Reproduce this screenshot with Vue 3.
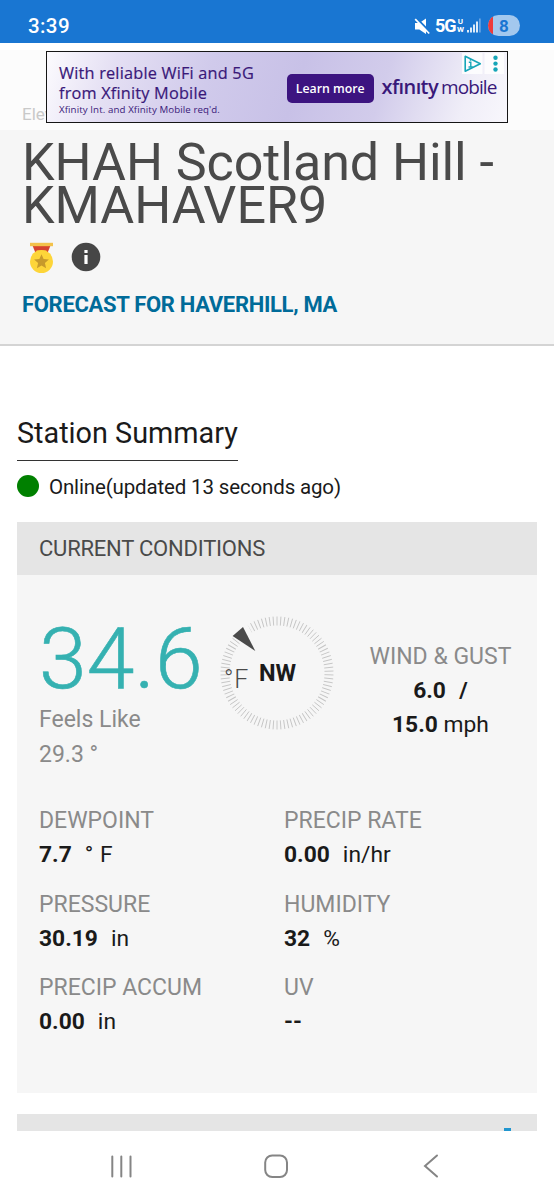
<script setup>
const ticks = Array.from({ length: 90 }, (_, i) => i * 4)
const readings = [
  { label: 'DEWPOINT', value: '7.7', unit: '° F' },
  { label: 'PRECIP RATE', value: '0.00', unit: 'in/hr' },
  { label: 'PRESSURE', value: '30.19', unit: 'in' },
  { label: 'HUMIDITY', value: '32', unit: '%' },
  { label: 'PRECIP ACCUM', value: '0.00', unit: 'in' },
  { label: 'UV', value: '--', unit: '' },
]
</script>

<template>
  <div class="screen">
    <div class="status">
      <span class="time">3:39</span>
      <div class="status-icons">
        <svg class="mute" width="17" height="17" viewBox="0 0 17 17">
          <path d="M1 5h4.300L12 .5v15.500L5.300 11.500H1z" fill="#fff" />
          <path d="M2.200 0l14.500 14.800" stroke="#1976d2" stroke-width="2.200" />
          <path d="M1.200 1.200l14 14.300" stroke="#fff" stroke-width="1.700" />
        </svg>
        <span class="net">5G</span>
        <span class="uw"><span>U</span><span>W</span></span>
        <svg class="signal" width="14" height="15" viewBox="0 0 14 15">
          <path d="M1 12v2.500M4 9.500v5M7 6.500v8M10 3.500v11" stroke="#fff" stroke-width="1.700" />
          <path d="M12.900 .5v14" stroke="#7db1e8" stroke-width="1.400" />
        </svg>
        <span class="battery"><span class="level"></span><span class="pct">8</span></span>
      </div>
    </div>

    <div class="top">
      <span class="elev">Elev</span>
      <div class="ad">
        <div class="ad-copy">
          <div class="ad-l1">With reliable WiFi and 5G</div>
          <div class="ad-l2">from Xfinity Mobile</div>
          <div class="ad-l3">Xfinity Int. and Xfinity Mobile req'd.</div>
        </div>
        <div class="ad-btn">Learn more</div>
        <div class="ad-logo"><span class="xf">xfınıty</span><span class="mob">mobile</span></div>
        <div class="ad-ctl">
          <svg width="42" height="21" viewBox="0 0 42 21">
            <path d="M0 0h20.500v21H0zM22.500 0H42v21H22.500z" fill="#fff" opacity=".8" />
            <path d="M3.200 3.300v15L18.300 10.800z" fill="none" stroke="#16a5b8" stroke-width="1.600" stroke-linejoin="round" />
            <path d="M6.800 9.300h2v4.800M6.500 14h4.300M8.500 6v1.700" fill="none" stroke="#16a5b8" stroke-width="1.400" />
            <g fill="#16a5b8"><circle cx="33.500" cy="4.700" r="2.200" /><circle cx="33.500" cy="10.600" r="2.200" /><circle cx="33.500" cy="16.500" r="2.200" /></g>
          </svg>
        </div>
      </div>
    </div>

    <header class="head">
      <h1>KHAH Scotland Hill -<br />KMAHAVER9</h1>
      <div class="badges">
        <svg width="26" height="32" viewBox="0 0 26 32">
          <path d="M3.500 3.500h18l-3 7.500h-12z" fill="#d6432f" />
          <path d="M1 .8h23v3.400H1z" fill="#f3c24b" />
          <path d="M7.500 8.500h10v3h-10z" fill="#f3c24b" />
          <circle cx="12.500" cy="19.500" r="11.500" fill="#fdd539" />
          <path d="M12.500 12.200l2.100 4.900 5.300.5-4 3.500 1.200 5.200-4.600-2.800-4.600 2.800 1.200-5.200-4-3.500 5.300-.5z" fill="#c79a2b" />
        </svg>
        <svg width="30" height="30" viewBox="0 0 30 30">
          <circle cx="15" cy="15" r="14.300" fill="#464646" />
          <path d="M13.400 8h3.200v3.100h-3.200zM13.400 12.900h3.200v9.100h-3.200z" fill="#fff" />
        </svg>
      </div>
      <div class="forecast">FORECAST FOR HAVERHILL, MA</div>
    </header>

    <main>
      <h2><span>Station Summary</span></h2>
      <div class="online"><span class="dot"></span><span>Online(updated 13 seconds ago)</span></div>

      <section class="card">
        <div class="card-head">CURRENT CONDITIONS</div>
        <div class="now">
          <div class="temp">
            <div class="deg">34.6</div>
            <div class="feels">Feels Like</div>
            <div class="feels">29.3 °</div>
          </div>
          <div class="compass">
            <svg width="120" height="120" viewBox="-60 -60 120 120">
              <path v-for="a in ticks" :key="a" d="M0-56.500V-47.500" :transform="`rotate(${a})`" stroke="#c4c4c4" stroke-width=".9" />
              <path d="M-47-39.500L-32-53L-16-24L-21.700-22.500z" fill="#f6f6f6" />
              <path d="M-44.400-37L-34-46L-21.700-22z" fill="#4a4a4a" />
            </svg>
            <span class="nw">NW</span>
            <span class="f">°F</span>
          </div>
          <div class="wind">
            <div class="label">WIND &amp; GUST</div>
            <div><b class="speed">6.0 &nbsp;/</b></div>
            <div><b>15.0</b> mph</div>
          </div>
        </div>
        <div class="grid">
          <div v-for="r in readings" :key="r.label">
            <div class="label">{{ r.label }}</div>
            <div class="val"><b>{{ r.value }}</b><span class="unit">{{ r.unit }}</span></div>
          </div>
        </div>
      </section>
      <section class="next"><span class="mark"></span></section>
    </main>

    <nav>
      <svg width="554" height="69" viewBox="0 0 554 69" fill="none" stroke="#858585" stroke-width="2" stroke-linecap="round">
        <path d="M112.300 25.500v20M121.300 25.500v20M130.500 25.500v20" />
        <rect x="265.200" y="24.400" width="21.800" height="21.600" rx="7" />
        <path d="M437 24.500L425 34.900L437 45.500" />
      </svg>
    </nav>
  </div>
</template>

<style>
body { margin: 0; background: #fff; }
</style>
<style scoped>
* { box-sizing: border-box; }
.screen { width: 554px; height: 1200px; overflow: hidden; background: #fff; font-family: Roboto, sans-serif; color: #1a1a1a; white-space: nowrap; }
.status { height: 43px; background: #1976d2; display: flex; justify-content: space-between; padding: 16px 34px 0 28px; color: #fff; }
.time { font: 500 20.500px/20px Roboto, sans-serif; letter-spacing: .4px; }
.status-icons { display: flex; align-items: flex-start; }
.mute { margin: 2px 4px 0 0; }
.net { font: 700 18px/20px Roboto, sans-serif; width: 21px; letter-spacing: -1px; }
.uw { display: flex; flex-direction: column; width: 9px; font: 700 8px/8px Roboto, sans-serif; padding-top: 2px; align-items: center; }
.signal { margin: 2px 7px 0 2px; }
.battery { position: relative; margin-top: -1px; width: 32px; height: 21px; border-radius: 10.500px; overflow: hidden; background: #a3c8ee; text-align: center; }
.level { position: absolute; left: 0; top: 0; width: 5px; height: 21px; background: #ee3b3b; }
.pct { font: 700 17px/22px Roboto, sans-serif; color: #1976d2; }
.top { height: 87px; background: #fcfcfc; border-top: 7px solid #fff; position: relative; }
.elev { position: absolute; left: 22px; top: 54px; font-size: 17px; line-height: 20px; color: #c9c9c9; }
.ad { position: absolute; left: 46px; top: 1px; width: 462px; height: 72px; border: 1.500px solid #161616; display: flex; background: linear-gradient(108deg, #fcfbfe 0%, #e4dff3 15%, #d0caeb 35%, #c8c1e7 54%, #d2cceb 72%, #f0eef8 90%, #f8f7fc 100%); color: #391879; }
.ad-copy { width: 240px; padding: 10.500px 0 0 12px; font-family: "Open Sans", sans-serif; }
.ad-l1, .ad-l2 { font-size: 16.300px; font-weight: 500; line-height: 20.500px; height: 20.500px; letter-spacing: .2px; -webkit-text-stroke: .2px #391879; }
.ad-l3 { font-size: 9.700px; line-height: 11px; letter-spacing: .1px; font-weight: 500; }
.ad-btn { margin-top: 21.500px; width: 86.500px; height: 29px; border-radius: 5px; background: #3c1480; color: #fff; text-align: center; font: 600 12.300px/29px "Open Sans", sans-serif; }
.ad-logo { margin: 23px 0 0 8px; font: 400 20px/24px "Open Sans", sans-serif; display: flex; gap: 3px; align-items: baseline; }
.xf { font-weight: 600; letter-spacing: -.6px; }
.mob { font-size: 19px; font-weight: 400; letter-spacing: -.9px; }
.ad-ctl { position: absolute; right: 3px; top: 1px; height: 21px; }
.head { height: 215.500px; background: #f6f6f6; border-bottom: 2px solid #d4d4d4; padding: 11px 0 0 22px; }
h1 { margin: 0; font-weight: 400; font-size: 52px; line-height: 43.300px; letter-spacing: -.06px; color: #4a4a4a; height: 87px; }
.badges { display: flex; padding: 14px 0 0 7px; height: 47px; gap: 16px; }
.forecast { margin-top: 17px; font-weight: 700; font-size: 22px; line-height: 26px; letter-spacing: -.31px; color: #006b99; height: 26px; }
main { height: 785.500px; padding: 70.500px 17px 0; overflow: hidden; }
h2 { margin: 0; height: 45px; font-weight: 400; font-size: 28.800px; line-height: 34px; }
h2 span { display: inline-block; height: 45px; border-bottom: 1.500px solid #333; }
.online { display: flex; height: 26px; margin-top: 12.500px; align-items: center; font-size: 20.500px; letter-spacing: -.15px; }
.dot { width: 22px; height: 22px; border-radius: 50%; background: #008000; margin: -1px 10px 0 0; }
.card { margin-top: 22.500px; height: 571px; width: 520px; background: #f6f6f6; }
.card-head { height: 53px; background: #e5e5e5; color: #4a4a4a; padding-left: 22px; font-size: 22px; line-height: 54px; letter-spacing: -.22px; }
.now { height: 228px; display: flex; padding-left: 22px; }
.temp { width: 181.500px; padding-top: 34px; }
.deg { font-weight: 300; font-size: 86px; line-height: 99px; height: 94px; color: #35b1b1; -webkit-text-stroke: .6px #35b1b1; }
.feels, .label { font-size: 23px; line-height: 35px; color: #8a8a8a; }
.feels { line-height: 34.500px; }
.compass { position: relative; width: 120px; height: 120px; margin-top: 38px; }
.nw { position: absolute; left: 42px; top: 46px; font-weight: 700; font-size: 23.500px; line-height: 28px; }
.f { position: absolute; left: 7px; top: 52px; font-weight: 300; font-size: 25px; line-height: 30px; color: #4a4a4a; letter-spacing: 1px; }
.wind { width: 204px; padding: 63.500px 0 0 7px; text-align: center; font-size: 22.800px; line-height: 34.700px; }
.speed { word-spacing: 1px; }
.grid { display: grid; grid-template-columns: 245px 1fr; grid-auto-rows: 83.600px; padding-left: 22px; }
.val { font-size: 22.800px; line-height: 34.500px; }
.unit { margin-left: 13px; word-spacing: 1px; }
b { font-weight: 700; }
.next { margin-top: 21px; height: 17px; width: 520px; background: #e5e5e5; display: flex; justify-content: flex-end; align-items: flex-end; padding-right: 26px; }
.mark { width: 7px; height: 3px; background: #2196cf; }
nav { height: 69px; }
</style>
